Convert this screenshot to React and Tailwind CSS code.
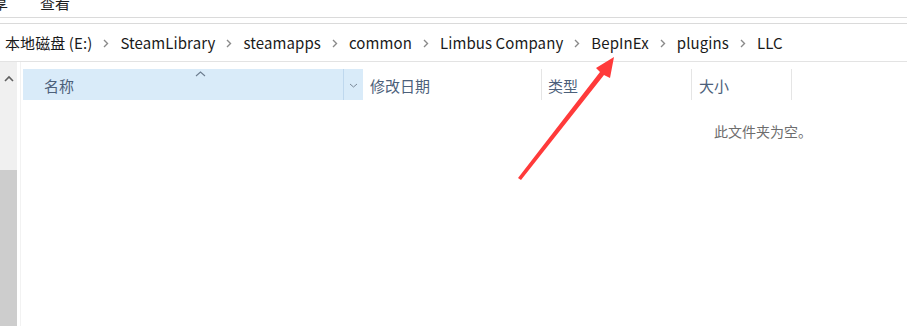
import React from 'react';

const cjk = { fontFamily: '"Noto Sans CJK SC", "Noto Sans", sans-serif' };

const crumbs = ['本地磁盘 (E:)', 'SteamLibrary', 'steamapps', 'common', 'Limbus Company', 'BepInEx', 'plugins', 'LLC'];

function Chevron() {
  return (
    <svg width="6" height="9" viewBox="0 0 6 9" className="mx-[11px] shrink-0">
      <path d="M1 1 L4.5 4.5 L1 8" fill="none" stroke="#8a8a8a" strokeWidth="1.4" />
    </svg>
  );
}

function RedArrow() {
  return (
    <svg className="absolute left-0 top-0 pointer-events-none" width="907" height="327">
      <polygon
        points="518,178 600,72 596,68 614,57 610,78 604,75 521,180"
        fill="#ff3a3a"
      />
    </svg>
  );
}

export default function App() {
  return (
    <div className="relative w-[907px] h-[327px] bg-white overflow-hidden text-[#1e1e1e]" style={cjk}>
      {/* ribbon tabs, cut off at the top */}
      <div className="h-[18px] border-b border-[#dadada] overflow-hidden">
        <div className="flex text-[15px] leading-[15px] -mt-[5px]">
          <span className="-ml-[7px]">享</span>
          <span className="ml-[32px]">查看</span>
        </div>
      </div>
      <div className="h-[6px] border-b border-[#dadada]" />

      {/* address bar */}
      <div className="h-[38px] flex items-center pl-[5px] pt-[2px] border-b border-[#e3e3e3] text-[15px] text-[#1a1a1a] tracking-[0.1px]">
        {crumbs.map((c, i) => (
          <React.Fragment key={c}>
            {i > 0 && <Chevron />}
            <span className="whitespace-nowrap">{c}</span>
          </React.Fragment>
        ))}
      </div>

      {/* body */}
      <div className="flex h-[264px]">
        <div className="w-[17px] bg-[#f0f0f0] flex flex-col">
          <div className="h-[108px] flex justify-center pt-[13px]">
            <svg width="10" height="7" viewBox="0 0 10 7">
              <path d="M1 6 L5 2 L9 6" fill="none" stroke="#606060" strokeWidth="1.6" />
            </svg>
          </div>
          <div className="flex-1 bg-[#cdcdcd]" />
        </div>
        <div className="w-[3px]" />
        <div className="w-px bg-[#f2f2f2]" />
        <div className="w-[2px]" />
        <div className="flex-1 pt-[7px]">
          <div className="flex h-[31px] text-[15px] text-[#4c607a]">
            <div className="relative w-[320px] bg-[#d9ebf9] flex items-center pl-[21px] pt-[3px]">
              名称
              <svg className="absolute left-[172px] top-[2px]" width="11" height="6" viewBox="0 0 11 6">
                <path d="M1 5 L5.5 1 L10 5" fill="none" stroke="#6d7d90" strokeWidth="1.1" />
              </svg>
            </div>
            <div className="w-px bg-[#bfd8ee]" />
            <div className="w-[19px] bg-[#d9ebf9] flex items-center justify-center pt-[2px]">
              <svg width="9" height="5" viewBox="0 0 9 5">
                <path d="M1 1 L4.5 4 L8 1" fill="none" stroke="#7a8898" strokeWidth="1" />
              </svg>
            </div>
            <div className="w-[178px] flex items-center pl-[7px] pt-[3px]">修改日期</div>
            <div className="w-px bg-[#e5e5e5]" />
            <div className="w-[149px] flex items-center pl-[6px] pt-[3px]">类型</div>
            <div className="w-px bg-[#e5e5e5]" />
            <div className="w-[99px] flex items-center pl-[7px] pt-[3px]">大小</div>
            <div className="w-px bg-[#e5e5e5]" />
          </div>
          <div className="pl-[691px] pt-[21px] text-[14px] text-[#6d6d6d]">此文件夹为空。</div>
        </div>
      </div>

      <RedArrow />
    </div>
  );
}
